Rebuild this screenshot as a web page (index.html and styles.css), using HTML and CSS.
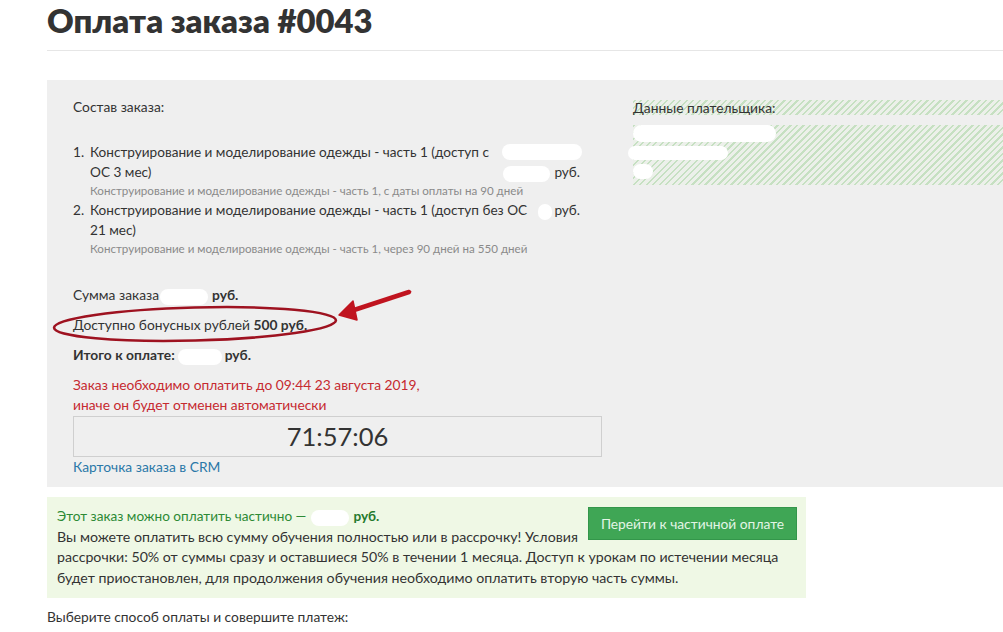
FILE: index.html
```
<!DOCTYPE html>
<html lang="ru">
<head>
<meta charset="utf-8">
<title>Оплата заказа #0043</title>
<link rel="stylesheet" href="styles.css">
</head>
<body>
<div class="page">
  <h1 class="title">Оплата заказа #0043</h1>

  <div class="panel">
    <div class="order">
      <p class="label">Состав заказа:</p>
      <ol class="items">
        <li class="item">
          <span class="num">1.</span>
          <div class="item-body">
            <div class="item-main">
              <div class="item-name">Конструирование и моделирование одежды - часть 1 (доступ с ОС 3 мес)</div>
              <div class="item-price wide"><span class="blob blob-a"></span><span class="blob blob-b"></span>руб.</div>
            </div>
            <div class="item-sub">Конструирование и моделирование одежды - часть 1, с даты оплаты на 90 дней</div>
          </div>
        </li>
        <li class="item">
          <span class="num">2.</span>
          <div class="item-body">
            <div class="item-main">
              <div class="item-name">Конструирование и моделирование одежды - часть 1 (доступ без ОС 21 мес)</div>
              <div class="item-price narrow"><span class="blob blob-c"></span>руб.</div>
            </div>
            <div class="item-sub">Конструирование и моделирование одежды - часть 1, через 90 дней на 550 дней</div>
          </div>
        </li>
      </ol>

      <div class="totals">
        <p class="line">Сумма заказа<span class="blob blob-sum"></span><b>руб.</b></p>
        <p class="line">Доступно бонусных рублей <b>500 руб.</b></p>
        <p class="line"><b>Итого к оплате:</b><span class="blob blob-total"></span><b>руб.</b></p>
      </div>

      <p class="warn">Заказ необходимо оплатить до 09:44 23 августа 2019,<br>иначе он будет отменен автоматически</p>
      <div class="timer">71:57:06</div>
      <a class="crm" href="#">Карточка заказа в CRM</a>
    </div>

    <div class="payer">
      <div class="payer-label">Данные плательщика:</div>
      <div class="payer-data">
        <span class="blob payer-1"></span>
        <span class="blob payer-2"></span>
        <span class="blob payer-3"></span>
      </div>
    </div>

    <svg class="mark" width="420" height="280" viewBox="0 0 420 280" aria-hidden="true">
      <ellipse cx="148" cy="244" rx="141" ry="16.5" transform="rotate(-1.5 148 244)" fill="none" stroke="#9e1220" stroke-width="2.6"/>
      <path d="M362 212 L304 231" stroke="#c0141f" stroke-width="4.5" stroke-linecap="round" fill="none"/>
      <path d="M292 235 L306 221 L310 240 Z" fill="#c0141f" stroke="#c0141f" stroke-width="1.5" stroke-linejoin="round"/>
    </svg>
  </div>

  <div class="partial">
    <a class="partial-btn" href="#">Перейти к частичной оплате</a>
    <p class="partial-head">Этот заказ можно оплатить частично —<span class="blob blob-part"></span><b>руб.</b></p>
    <p class="partial-text">Вы можете оплатить всю сумму обучения полностью или в рассрочку! Условия рассрочки: 50% от суммы сразу и оставшиеся 50% в течении 1 месяца. Доступ к урокам по истечении месяца будет приостановлен, для продолжения обучения необходимо оплатить вторую часть суммы.</p>
  </div>

  <p class="choose">Выберите способ оплаты и совершите платеж:</p>
</div>
</body>
</html>
```

FILE: styles.css
```
* { box-sizing: border-box; }

html, body {
  margin: 0;
  padding: 0;
  background: #ffffff;
  overflow: hidden;
}

body {
  font-family: Lato, "Liberation Sans", sans-serif;
  font-size: 13.8px;
  color: #333333;
}

.page {
  padding-left: 47px;
}

.title {
  margin: 0;
  padding-top: 1px;
  height: 51px;
  border-bottom: 1px solid #e6e6e6;
  font-size: 32.8px;
  line-height: 40px;
  font-weight: 800;
  color: #333333;
}

.panel {
  position: relative;
  margin-top: 29px;
  background: #efefef;
  display: flex;
  gap: 31px;
  padding: 17px 0 10px 26px;
}

.order {
  width: 529px;
  flex: none;
}

.label {
  margin: 0;
  line-height: 20px;
}

.items {
  list-style: none;
  margin: 25px 0 0 0;
  padding: 0;
  width: 507px;
}

.item {
  display: flex;
  font-size: 13.6px;
  line-height: 20px;
}

.num {
  width: 17px;
  flex: none;
}

.item-body {
  flex: 1;
}

.item-main {
  display: flex;
  gap: 4px;
  align-items: flex-end;
}

.item-name {
  flex: 1;
}

.item-price {
  flex: none;
  text-align: right;
  white-space: nowrap;
}

.item-price.wide {
  width: 78px;
  white-space: normal;
}

.item-price.narrow {
  width: 46px;
  align-self: flex-start;
}

.item-sub {
  font-size: 11.6px;
  line-height: 18px;
  color: #8a8a8a;
}

.blob {
  display: inline-block;
  background: #ffffff;
  border-radius: 999px;
  vertical-align: middle;
}

.blob-a { width: 80px; height: 16px; display: block; margin-left: auto; margin-right: -2px; margin-top: -18px; margin-bottom: 2px; }
.blob-b { width: 47px; height: 16px; margin-right: 4px; }
.blob-c { width: 14px; height: 16px; margin-right: 2px; }
.blob-sum { width: 48px; height: 16px; margin: 0 4px 0 1px; }
.blob-total { width: 44px; height: 16px; margin: 0 3px 0 3px; }
.blob-part { width: 38px; height: 16px; margin: 0 4px 0 5px; }

.totals {
  margin-top: 27px;
}

.line {
  margin: 0 0 10px 0;
  line-height: 20px;
}

.line:last-child {
  margin-bottom: 0;
}

.warn {
  margin: 10px 0 0 0;
  line-height: 20px;
  color: #c62a30;
}

.timer {
  margin-top: 1px;
  height: 41px;
  border: 1px solid #cfcfcf;
  background: #efefef;
  font-size: 25.5px;
  line-height: 39px;
  text-align: center;
  color: #333333;
}

.crm {
  display: block;
  line-height: 20px;
  color: #2a78a8;
  text-decoration: none;
}

.payer {
  flex: 1;
  padding-top: 3px;
}

.payer-label,
.payer-data {
  background-color: #ecf0ea;
  background-image: repeating-linear-gradient(-45deg, #ecf0ea 0, #ecf0ea 3px, #c6e0c2 3px, #c6e0c2 4.6px);
}

.payer-label {
  height: 15px;
  line-height: 15px;
}

.payer-data {
  margin-top: 10px;
  height: 60px;
  display: flex;
  flex-direction: column;
  gap: 4px;
}

.payer-1 { width: 143px; height: 17px; display: block; }
.payer-2 { width: 100px; height: 14px; display: block; margin-left: -5px; }
.payer-3 { width: 20px; height: 15px; display: block; }

.mark {
  position: absolute;
  left: 0;
  top: 0;
  pointer-events: none;
}

.partial {
  margin-top: 10px;
  width: 759px;
  background: #eff8e5;
  padding: 10px 9px 10px 10px;
  font-size: 14.2px;
  line-height: 20.5px;
  color: #333333;
}

.partial-btn {
  float: right;
  display: flex;
  align-items: center;
  justify-content: center;
  width: 209px;
  height: 33px;
  margin-left: 8px;
  background: #3fa655;
  border: 1px solid #33964a;
  color: #e3f5e6;
  font-size: 13.8px;
  line-height: 16px;
  text-decoration: none;
}

.partial-head {
  margin: -1px 0 0 0;
  font-size: 13.6px;
  color: #2d8a35;
}

.partial-head b {
  color: #257a2e;
}

.partial-text {
  margin: 0;
}

.choose {
  margin: 9px 0 0 0;
  line-height: 20px;
}
```
